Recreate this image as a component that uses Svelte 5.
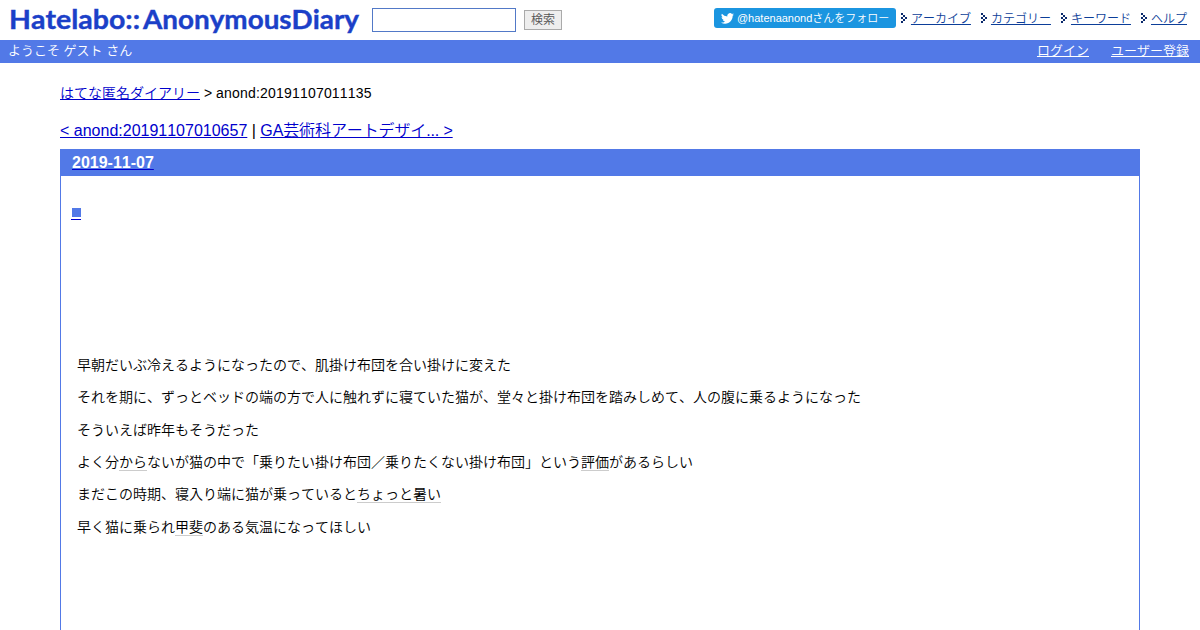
<script lang="ts">
	type Part = { text: string; keyword?: boolean };

	const helpLinks = ['アーカイブ', 'カテゴリー', 'キーワード', 'ヘルプ'];
	const arrow = [[0, 0], [2, 2], [0, 4], [4, 4], [2, 6], [0, 8]];

	const paragraphs: Part[][] = [
		[{ text: '早朝だいぶ冷えるようになったので、肌掛け布団を合い掛けに変えた' }],
		[{ text: 'それを期に、ずっとベッドの端の方で人に触れずに寝ていた猫が、堂々と掛け布団を踏みしめて、人の腹に乗るようになった' }],
		[{ text: 'そういえば昨年もそうだった' }],
		[
			{ text: 'よく分' },
			{ text: 'から', keyword: true },
			{ text: 'ないが猫の中で「乗りたい掛け布団／乗りたくない掛け布団」という' },
			{ text: '評価', keyword: true },
			{ text: 'があるらしい' }
		],
		[{ text: 'まだこの時期、寝入り端に猫が乗っていると' }, { text: 'ちょっと暑い', keyword: true }],
		[{ text: '早く猫に乗られ' }, { text: '甲斐', keyword: true }, { text: 'のある気温になってほしい' }]
	];

	let query = $state('');
</script>

<header>
	<svg class="logo" width="352" height="40" viewBox="0 0 352 40">
		<text x="0" y="29" textLength="131" lengthAdjust="spacingAndGlyphs">Hatelabo::</text>
		<text x="134" y="29" textLength="216" lengthAdjust="spacingAndGlyphs">AnonymousDiary</text>
	</svg>
	<form onsubmit={(e) => e.preventDefault()}>
		<input type="text" bind:value={query} aria-label="検索" />
		<button>検索</button>
	</form>
	<nav>
		<a class="follow" href="#follow">
			<svg width="13" height="11" viewBox="0 0 24 20">
				<path d="M24 2.4a10 10 0 0 1-2.8.8A5 5 0 0 0 23.3.4a10 10 0 0 1-3.1 1.2 4.9 4.9 0 0 0-8.4 4.5A14 14 0 0 1 1.7 1a4.9 4.9 0 0 0 1.5 6.6A5 5 0 0 1 1 7v.1a4.9 4.9 0 0 0 3.9 4.8 5 5 0 0 1-2.2.1 4.9 4.9 0 0 0 4.6 3.4A9.9 9.9 0 0 1 0 17.5 14 14 0 0 0 7.5 19.7c9.1 0 14.3-7.7 14-14.7A10 10 0 0 0 24 2.4z" />
			</svg>
			<span>@hatenaanondさんをフォロー</span>
		</a>
		{#each helpLinks as label}
			<span class="item">
				<svg width="10" height="12" viewBox="0 0 10 12" shape-rendering="crispEdges">
					{#each arrow as [x, y]}
						<rect {x} y={y + 1} width="2" height="2" />
					{/each}
				</svg>
				<a href="#help">{label}</a>
			</span>
		{/each}
	</nav>
</header>

<div class="guide">
	<span>ようこそ ゲスト さん</span>
	<div class="account">
		<a href="#login">ログイン</a>
		<a href="#register">ユーザー登録</a>
	</div>
</div>

<main>
	<p class="breadcrumb"><a href="#top">はてな匿名ダイアリー</a> &gt; <span>anond:20191107011135</span></p>
	<p class="pager">
		<a href="#prev">&lt; anond:20191107010657</a> | <a class="next" href="#next">GA芸術科アートデザイ... &gt;</a>
	</p>
	<article>
		<h2><a href="#day">2019-11-07</a></h2>
		<h3><a href="#entry" aria-label="■"><span></span></a></h3>
		<div class="body">
			{#each paragraphs as parts}
				<p>{#each parts as part}<span class:keyword={part.keyword}>{part.text}</span>{/each}</p>
			{/each}
		</div>
	</article>
</main>

<style>
	:global(body) {
		background: #fff;
		color: #000;
		font-family: 'Liberation Sans', 'Noto Sans CJK JP', sans-serif;
		font-weight: 350;
		font-kerning: none;
	}

	:global(#app) {
		height: 630px;
		overflow: hidden;
	}

	header {
		display: flex;
		height: 40px;
		box-sizing: border-box;
		padding: 0 13px 0 9px;
	}

	.logo {
		flex: none;
		font-family: Lato, sans-serif;
		font-size: 27px;
		font-weight: 700;
		fill: #1b40c8;
		stroke: #1b40c8;
		stroke-width: 0.4px;
	}

	form {
		display: flex;
		gap: 8px;
		margin: 8px 0 0 11px;
	}

	input {
		box-sizing: border-box;
		width: 144px;
		height: 24px;
		padding: 2px 4px;
		border: 1px solid #5279c7;
		outline: none;
	}

	button {
		width: 38px;
		height: 20px;
		margin-top: 2px;
		padding: 0 0 2px;
		border: 1px solid #aaa;
		background: #eee;
		color: #555;
		font: 350 12px/16px 'Noto Sans CJK JP', sans-serif;
	}

	nav {
		display: flex;
		gap: 10px;
		margin-left: auto;
		font-size: 12px;
	}

	.follow {
		display: flex;
		box-sizing: border-box;
		align-items: center;
		width: 182px;
		height: 20px;
		margin: 8px -5px 0 0;
		padding-left: 7px;
		gap: 3px;
		border-radius: 3px;
		background: #1b95e0;
		color: #fff;
		font-size: 11px;
		line-height: 20px;
		text-decoration: none;
		white-space: nowrap;
	}

	.follow svg {
		fill: #fff;
	}

	.item {
		display: flex;
		height: 20px;
		margin-top: 8px;
		line-height: 22px;
	}

	.item svg {
		margin-top: 4px;
		fill: #0a2a6c;
	}

	.item a {
		color: #0c3e99;
		text-underline-offset: 1px;
	}

	.guide {
		display: flex;
		justify-content: space-between;
		height: 23px;
		padding: 0 11px 0 8px;
		background: #5279e7;
		color: #fff;
		font-size: 13px;
		line-height: 22px;
	}

	.account {
		display: flex;
		gap: 22px;
	}

	.account a {
		color: #fff;
	}

	main {
		margin: 0 60px;
	}

	main > p {
		margin: 0;
	}

	a {
		color: #0000cc;
	}

	.breadcrumb {
		padding-top: 20px;
		font-size: 14px;
		line-height: 20px;
	}

	.breadcrumb span {
		letter-spacing: 0.2px;
	}

	.pager {
		padding: 16px 0 7px;
		font-size: 16px;
		line-height: 23px;
	}

	.next {
		letter-spacing: -0.12px;
	}

	article {
		height: 520px;
		border: 1px solid #5279e7;
		border-top: 0;
	}

	h2 {
		height: 27px;
		margin: 0 -1px;
		padding-left: 12px;
		background: #5279e7;
		font-size: 16px;
		line-height: 27px;
	}

	h2 a {
		color: #fff;
		text-decoration-color: #0000cc;
	}

	h3 {
		margin: 32px 0 0 10px;
	}

	h3 a {
		display: block;
		width: 10px;
		height: 11px;
		border-bottom: 1px solid #0000cc;
	}

	h3 span {
		display: block;
		width: 9px;
		height: 9px;
		margin-left: 1px;
		background: #5279e7;
	}

	.body {
		padding: 134.8px 16px 0;
	}

	.body p {
		margin: 0 0 12.4px;
		font-size: 14px;
		line-height: 20px;
	}

	.keyword {
		border-bottom: 1px solid #ccc;
	}
</style>
